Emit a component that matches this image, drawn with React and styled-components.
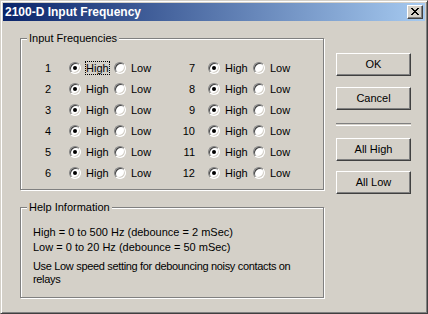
import React from 'react';
import styled, { createGlobalStyle } from 'styled-components';

const GlobalStyle = createGlobalStyle`
  html, body {
    margin: 0;
    padding: 0;
    background: #d4d0c8;
  }
  body {
    font-family: "Liberation Sans", Arial, sans-serif;
    font-size: 11px;
    color: #000;
  }
`;

// Classic dialog frame
const Window = styled.div`
  width: 428px;
  height: 314px;
  box-sizing: border-box;
  background: #d4d0c8;
  border: 1px solid;
  border-color: #d4d0c8 #404040 #404040 #d4d0c8;
  box-shadow: inset 1px 1px 0 #fff, inset -1px -1px 0 #808080;
  padding: 2px;
  display: flex;
  flex-direction: column;
`;

const TitleBar = styled.div`
  height: 18px;
  flex: none;
  display: flex;
  align-items: center;
  justify-content: space-between;
  padding: 0 2px;
  background: linear-gradient(to right, #0a246a, #a6caf0);
`;

const Title = styled.span`
  color: #fff;
  font-weight: bold;
  font-size: 12px;
  line-height: 14px;
`;

const CloseButton = styled.div`
  width: 16px;
  height: 14px;
  box-sizing: border-box;
  background: #d4d0c8;
  border: 1px solid;
  border-color: #fff #404040 #404040 #fff;
  box-shadow: inset -1px -1px 0 #808080;
  display: flex;
  align-items: center;
  justify-content: center;
  padding: 0 1px 1px 0;
`;

const Body = styled.div`
  display: flex;
  padding: 11px 0 0 17px;
`;

const LeftCol = styled.div`
  width: 304px;
  display: flex;
  flex-direction: column;
  gap: 11px;
`;

const RightCol = styled.div`
  width: 75px;
  margin-left: 12px;
  padding-top: 21px;
  display: flex;
  flex-direction: column;
`;

const Group = styled.fieldset`
  margin: 0;
  padding: ${p => p.$pad};
  border: 1px solid #808080;
  box-shadow: inset 1px 1px 0 #fff, 1px 1px 0 #fff;
  min-width: 0;
`;

const Caption = styled.legend`
  margin-left: 6px;
  padding: 0 2px;
  background: #d4d0c8;
  line-height: 13px;
`;

const FreqGrid = styled.div`
  display: grid;
  grid-template-columns: 30px 108px 36px 1fr;
  grid-auto-rows: 21px;
  align-items: center;
`;

const Num = styled.span`
  text-align: right;
`;

const Choices = styled.div`
  display: flex;
  padding-left: ${p => p.$indent}px;
`;

const Option = styled.label`
  display: flex;
  align-items: center;
  width: 45px;
  gap: 5px;
`;

const Radio = styled.span`
  position: relative;
  flex: none;
  box-sizing: border-box;
  width: 12px;
  height: 12px;
  border-radius: 50%;
  border: 1px solid;
  border-color: #808080 #fff #fff #808080;
  background: #fff;
  box-shadow: inset 1px 1px 0 #404040, inset -1px -1px 0 #d4d0c8;

  &::after {
    content: '';
    display: ${p => (p.$checked ? 'block' : 'none')};
    position: absolute;
    left: 3px;
    top: 3px;
    width: 4px;
    height: 4px;
    border-radius: 50%;
    background: #000;
  }
`;

const OptionText = styled.span`
  line-height: 12px;
  outline: ${p => (p.$focus ? '1px dotted #000' : 'none')};
`;

const HelpText = styled.div`
  width: 280px;
  margin-left: 12px;
  line-height: 15px;
`;

const HelpPara = styled.p`
  margin: 5px 0 0;
  line-height: 13px;
  letter-spacing: -0.33px;
`;

const Button = styled.div`
  width: 75px;
  height: 23px;
  box-sizing: border-box;
  border: 1px solid;
  border-color: #fff #404040 #404040 #fff;
  box-shadow: inset -1px -1px 0 #808080;
  display: flex;
  align-items: center;
  justify-content: center;
  margin-bottom: ${p => (p.$gap === undefined ? 10 : p.$gap)}px;
  padding-bottom: 1px;
`;

const Separator = styled.div`
  height: 1px;
  border-top: 1px solid #808080;
  border-bottom: 1px solid #fff;
  margin: 13px 0 12px;
`;

const CLOSE_GLYPH = [
  'XX    XX',
  ' XX  XX ',
  '  XXXX  ',
  '   XX   ',
  '  XXXX  ',
  ' XX  XX ',
  'XX    XX',
];

const CloseIcon = () => (
  <svg width="8" height="7" viewBox="0 0 8 7" shapeRendering="crispEdges">
    {CLOSE_GLYPH.map((row, y) =>
      row.split('').map((c, x) =>
        c === 'X' ? <rect key={`${x}-${y}`} x={x} y={y} width="1" height="1" fill="#000" /> : null
      )
    )}
  </svg>
);

const FreqChoice = ({ indent, focus }) => (
  <Choices $indent={indent}>
    <Option>
      <Radio $checked />
      <OptionText $focus={focus}>High</OptionText>
    </Option>
    <Option>
      <Radio />
      <OptionText>Low</OptionText>
    </Option>
  </Choices>
);

const App = () => {
  const rows = [1, 2, 3, 4, 5, 6];

  return (
    <>
      <GlobalStyle />
      <Window>
        <TitleBar>
          <Title>2100-D Input Frequency</Title>
          <CloseButton>
            <CloseIcon />
          </CloseButton>
        </TitleBar>
        <Body>
          <LeftCol>
            <Group $pad="12px 0 6px">
              <Caption>Input Frequencies</Caption>
              <FreqGrid>
                {rows.map(n => (
                  <React.Fragment key={n}>
                    <Num>{n}</Num>
                    <FreqChoice indent={18} focus={n === 1} />
                    <Num>{n + 6}</Num>
                    <FreqChoice indent={13} />
                  </React.Fragment>
                ))}
              </FreqGrid>
            </Group>
            <Group $pad="11px 0 11px">
              <Caption>Help Information</Caption>
              <HelpText>
                <div>High = 0 to 500 Hz (debounce = 2 mSec)</div>
                <div>Low = 0 to 20 Hz (debounce = 50 mSec)</div>
                <HelpPara>Use Low speed setting for debouncing noisy contacts on relays</HelpPara>
              </HelpText>
            </Group>
          </LeftCol>
          <RightCol>
            <Button $gap={11}>OK</Button>
            <Button $gap={0}>Cancel</Button>
            <Separator />
            <Button>All High</Button>
            <Button>All Low</Button>
          </RightCol>
        </Body>
      </Window>
    </>
  );
};

export default App;
